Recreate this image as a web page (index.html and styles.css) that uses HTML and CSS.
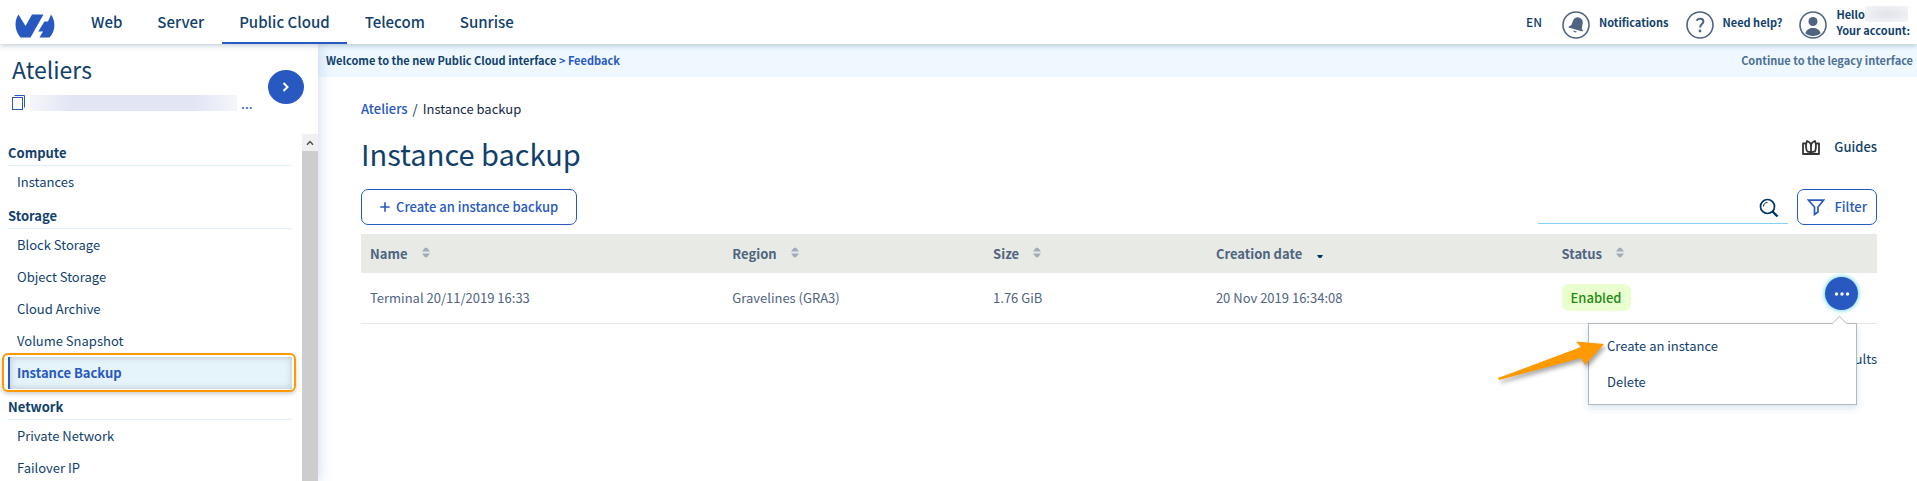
FILE: index.html
```html
<!DOCTYPE html>
<html lang="en">
<head>
<meta charset="utf-8">
<title>Instance backup</title>
<link rel="stylesheet" href="styles.css">
</head>
<body>
<header class="topbar">
  <a class="logo" href="#" aria-label="Home">
    <svg width="40" height="24" viewBox="0 0 40 24"><path fill="#2859c0" d="M3.500 0.500 10.500 12 17 0.500H28.500L15.500 23.500H5.500C-.5 17 -1 7 3.500 .5ZM36 .5C41 8 40.500 17 34.500 23.500H24.500L28 17.500H23.200L29.500 7.500H33Z"/></svg>
  </a>
  <nav class="nav">
    <a href="#">Web</a>
    <a href="#">Server</a>
    <a href="#" class="current">Public Cloud</a>
    <a href="#">Telecom</a>
    <a href="#">Sunrise</a>
  </nav>
  <div class="tools">
    <button class="lang">EN</button>
    <button class="tool">
      <svg width="28" height="28" viewBox="0 0 28 28"><circle cx="14" cy="14" r="13" fill="none" stroke="#4f6480" stroke-width="1.600"/><path fill="#4f6480" d="M17 6.500c3 1 4.500 3.500 3.500 7l-.5 2.500c-.3 1.500 0 2.500 1 3.500l-.5 1L6.500 16.500l.3-1.200c1.600-.2 2.400-.9 3-2.300l1-2.700c1-3 3.300-4.500 5.500-4zM11 19.500l4 1.200c-.6 1.300-3.500.8-4-1.200z"/></svg>
      <span>Notifications</span>
    </button>
    <button class="tool">
      <svg width="28" height="28" viewBox="0 0 28 28"><circle cx="14" cy="14" r="13" fill="none" stroke="#4f6480" stroke-width="1.600"/><path fill="none" stroke="#4f6480" stroke-width="2" d="M10.800 9.800c.8-3 6.600-2.800 6.600.6 0 2.500-3.400 3-3.400 6.200"/><circle cx="14" cy="20" r="1.400" fill="#4f6480"/></svg>
      <span>Need help?</span>
    </button>
    <button class="tool account">
      <svg width="28" height="28" viewBox="0 0 28 28"><circle cx="14" cy="14" r="13" fill="none" stroke="#4f6480" stroke-width="1.600"/><circle cx="14" cy="10.500" r="4.500" fill="#4f6480"/><path fill="#4f6480" d="M6.500 22.500c.5-7.500 14.500-7.500 15 0-3.500 3.300-11.500 3.300-15 0z"/></svg>
      <span><span class="hello">Hello<i class="name-mask"></i></span>Your account:</span>
    </button>
  </div>
</header>
<div class="body">
  <aside class="sidebar">
    <div class="project">
      <div class="project-info">
        <h2>Ateliers</h2>
        <div class="project-id">
          <svg width="14" height="16" viewBox="0 0 14 16" fill="none" stroke="#2859c0"><rect x=".5" y="2.500" width="10" height="12"/><path d="M2.500.5h10v12"/></svg>
          <i class="id-mask"></i><span>...</span>
        </div>
      </div>
      <button class="round" aria-label="Switch project"><svg width="8" height="10" viewBox="0 0 8 10"><path fill="none" stroke="#fff" stroke-width="2" d="M1.500 1 5.500 5l-4 4"/></svg></button>
    </div>
    <div class="side-scroll">
      <nav class="menu">
        <h3>Compute</h3>
        <a href="#">Instances</a>
        <h3>Storage</h3>
        <a href="#">Block Storage</a>
        <a href="#">Object Storage</a>
        <a href="#">Cloud Archive</a>
        <a href="#">Volume Snapshot</a>
        <a href="#" class="active">Instance Backup</a>
        <h3>Network</h3>
        <a href="#">Private Network</a>
        <a href="#">Failover IP</a>
      </nav>
      <div class="scrollbar"><div class="scroll-up"><svg width="8" height="6" viewBox="0 0 8 6"><path fill="none" stroke="#505050" stroke-width="1.500" d="M1 4.700 4 1.500l3 3.200"/></svg></div></div>
    </div>
  </aside>
  <main class="main">
    <div class="banner">
      <p>Welcome to the new Public Cloud interface <a href="#">&gt; Feedback</a></p>
      <a class="legacy" href="#">Continue to the legacy interface</a>
    </div>
    <div class="content">
      <nav class="crumbs"><a href="#">Ateliers</a><span>/</span><span>Instance backup</span></nav>
      <div class="heading">
        <h1>Instance backup</h1>
        <button class="guides"><svg width="18" height="15" viewBox="0 0 18 15" fill="none" stroke="#333" stroke-width="1.800" stroke-linejoin="round"><path d="M3.500 3.500H1V14h16V3.500h-2.500M5 11.500C3.800 8 3.800 4 5 1c2.500 1 4 2.500 4 5M5 11.500C7 11.500 8.500 12.300 9 13.500c.5-1.200 2-2 4-2C14.200 8 14.200 4 13 1 10.500 2 9 3.500 9 6v6"/></svg>Guides</button>
      </div>
      <div class="actions">
        <button class="btn create"><svg width="10" height="10" viewBox="0 0 10 10"><path stroke="#2859c0" stroke-width="1.600" d="M5 .3v9.400M.3 5h9.400"/></svg>Create an instance backup</button>
        <div class="search">
          <input type="search" aria-label="Search">
          <svg width="20" height="20" viewBox="0 0 20 20" fill="none" stroke="#00355f"><circle cx="8.500" cy="8.500" r="7" stroke-width="1.700"/><path stroke-width="2.400" d="m13.500 13.500 5 5"/><path stroke-width="1" d="M4.500 8.500c0-2.500 1.500-4 4-4"/></svg>
        </div>
        <button class="btn filter"><svg width="18" height="17" viewBox="0 0 18 17" fill="none" stroke="#2859c0" stroke-width="1.700"><path d="M1.500 1.200h15L11 8v5l-3.500 2.500V8z"/></svg>Filter</button>
      </div>
      <table class="grid">
        <thead>
          <tr>
            <th class="c-name">Name<svg class="sort" width="8" height="12" viewBox="0 0 8 12"><path d="M0 4.500 2.500 1.200 4 .5l1.500.7L8 4.500zM0 6.500h8L5.500 9.800 4 10.500l-1.500-.7z"/></svg></th>
            <th class="c-region">Region<svg class="sort" width="8" height="12" viewBox="0 0 8 12"><path d="M0 4.500 2.500 1.200 4 .5l1.500.7L8 4.500zM0 6.500h8L5.500 9.800 4 10.500l-1.500-.7z"/></svg></th>
            <th class="c-size">Size<svg class="sort" width="8" height="12" viewBox="0 0 8 12"><path d="M0 4.500 2.500 1.200 4 .5l1.500.7L8 4.500zM0 6.500h8L5.500 9.800 4 10.500l-1.500-.7z"/></svg></th>
            <th class="c-date">Creation date<svg class="sort on" width="8" height="12" viewBox="0 0 8 12"><path d="M1 8h6L5.500 10.500 4 11.300l-1.500-.8z"/></svg></th>
            <th class="c-status">Status<svg class="sort" width="8" height="12" viewBox="0 0 8 12"><path d="M0 4.500 2.500 1.200 4 .5l1.500.7L8 4.500zM0 6.500h8L5.500 9.800 4 10.500l-1.500-.7z"/></svg></th>
            <th></th>
          </tr>
        </thead>
        <tbody>
          <tr>
            <td>Terminal 20/11/2019 16:33</td>
            <td>Gravelines (GRA3)</td>
            <td>1.76 GiB</td>
            <td>20 Nov 2019 16:34:08</td>
            <td><span class="badge">Enabled</span></td>
            <td class="row-menu">
              <div class="anchor">
                <button class="round small" aria-label="Actions"><svg width="16" height="4" viewBox="0 0 16 4" fill="#fff"><circle cx="2.500" cy="2" r="1.700"/><circle cx="8" cy="2" r="1.700"/><circle cx="13.500" cy="2" r="1.700"/></svg></button>
                <div class="dropdown">
                  <button>Create an instance</button>
                  <button>Delete</button>
                  <svg class="pointer" width="108" height="40" viewBox="0 0 108 40"><path fill="#ff9900" d="M1 37 84 6 79 .500 107 3 88 24 84 17 2 39Z"/></svg>
                </div>
              </div>
            </td>
          </tr>
        </tbody>
      </table>
      <p class="results">1 results</p>
    </div>
  </main>
</div>
</body>
</html>
```

FILE: styles.css
```css
* { box-sizing: border-box; }
body {
  margin: 0;
  height: 100vh;
  display: flex;
  flex-direction: column;
  overflow: hidden;
  background: #fff;
  color: #113f6d;
  font: 13px/20px "Noto Sans CJK SC", "Noto Sans", sans-serif;
}
a { color: inherit; text-decoration: none; }
h1, h2, h3, p { margin: 0; font-weight: 400; }
button { font: inherit; color: inherit; background: none; border: 0; padding: 0; cursor: pointer; }
svg { display: block; flex: none; }

.topbar {
  position: relative;
  z-index: 2;
  flex: none;
  display: flex;
  height: 44px;
  background: #fff;
  box-shadow: 0 1px 6px rgba(0, 55, 95, .3);
}
.logo { padding: 14px 19px 0 15px; }
.nav { display: flex; gap: 1px; }
.nav a {
  padding: 12px 17px 0;
  font-size: 15px;
  font-weight: 500;
  border-bottom: 2px solid transparent;
}
.nav .current { border-color: #2859c0; }
.tools {
  display: flex;
  align-items: center;
  margin-left: auto;
  padding-right: 7px;
  font-size: 11px;
  font-weight: 700;
}
.lang { margin-right: 20px; font-weight: 500; font-size: 12px; }
.tool { display: flex; align-items: center; gap: 9px; margin-right: 17px; line-height: 16px; text-align: left; }
.tool svg { margin-top: 5px; }
.account { margin-right: 0; }
.hello { display: flex; }
.name-mask { width: 43px; height: 16px; background: radial-gradient(#e0e3e9, #f4f5f8); }

.body { flex: 1; display: flex; min-height: 0; }
.sidebar {
  position: relative;
  z-index: 1;
  flex: none;
  display: flex;
  flex-direction: column;
  width: 318px;
  background: #fff;
  box-shadow: 0 0 14px rgba(40, 89, 192, .25);
}
.project { display: flex; justify-content: space-between; height: 90px; padding: 11px 14px 0 12px; }
.project h2 { font-size: 23px; line-height: 28px; }
.project-id { display: flex; align-items: center; gap: 4px; margin-top: 12px; color: #2859c0; font-size: 14px; line-height: 16px; }
.id-mask { width: 207px; height: 16px; background: linear-gradient(90deg, #f5f6fb, #e2e6f4 20%, #e2e6f4 80%, #f5f6fb); }
.round {
  display: flex;
  align-items: center;
  justify-content: center;
  width: 36px;
  height: 34px;
  margin-top: 15px;
  border-radius: 50%;
  background: #2859c0;
}
.side-scroll { flex: 1; display: flex; min-height: 0; }
.menu { flex: 1; padding: 1px 10px 0 8px; }
.menu h3 { height: 31px; padding-top: 8px; font-size: 13px; font-weight: 700; border-bottom: 1px solid #dff1fa; }
.menu a { display: block; padding: 6px 9px; }
.menu .active {
  position: relative;
  padding-left: 7px;
  border-left: 2px solid #2859c0;
  background: #e5f3fb;
  color: #2859c0;
  font-weight: 700;
  box-shadow: inset 0 0 7px rgba(0, 0, 0, .2);
}
.active::after {
  content: "";
  position: absolute;
  inset: -4px -4px -3px -8px;
  border: 2px solid #f90;
  border-radius: 6px;
  box-shadow: 0 2px 4px rgba(0, 0, 0, .2);
}
.scrollbar { width: 16px; background: #cdcdcd; }
.scroll-up { display: flex; align-items: center; justify-content: center; height: 17px; background: #f0f0f0; }

.main { flex: 1; min-width: 0; }
.banner {
  display: flex;
  justify-content: space-between;
  padding: 6px 4px 7px 8px;
  background: #eef8fe;
  font-size: 11px;
}
.banner p { font-weight: 700; }
.banner p a { color: #2859c0; }
.legacy { color: #4d7096; font-weight: 700; }
.content { padding: 22px 40px 0 43px; }
.crumbs { display: flex; gap: 5px; color: #122844; }
.crumbs a { color: #2859c0; font-weight: 500; }
.heading { display: flex; justify-content: space-between; margin-top: 14px; }
.heading h1 { font-size: 29px; line-height: 40px; }
.guides { display: flex; align-items: center; gap: 14px; height: 28px; font-weight: 500; }
.actions { display: flex; gap: 9px; margin-top: 16px; }
.btn {
  display: flex;
  align-items: center;
  height: 36px;
  border: 1px solid #2859c0;
  border-radius: 7px;
  color: #2859c0;
  font-weight: 500;
}
.create { gap: 6px; padding: 0 18px; }
.filter { gap: 9px; padding: 0 9px; }
.search { display: flex; align-items: center; width: 250px; height: 35px; margin-left: auto; padding: 4px 9px 0 0; border-bottom: 1px solid #85d0f5; }
.search input { flex: 1; min-width: 0; height: 30px; border: 0; outline: 0; font: inherit; }

.grid { width: 100%; margin-top: 9px; border-collapse: collapse; table-layout: fixed; color: #4f6480; }
.grid th, .grid td { padding: 0 9px; text-align: left; }
.grid th { height: 39px; background: #e8ebe5; font-weight: 700; }
.grid td { height: 50px; border-bottom: 1px solid #e6e8e8; }
.c-name { width: 23.9%; }
.c-region { width: 17.2%; }
.c-size { width: 14.7%; }
.c-date { width: 22.8%; }
.c-status { width: 11%; }
.sort { display: inline-block; margin-left: 14px; fill: #a2abb8; }
.sort.on { fill: #00355f; }
.badge { display: inline-block; padding: 4px 9px 3px; border-radius: 7px; background: #eaffd0; color: #1f8a12; font-weight: 500; }
.anchor { position: relative; display: flex; justify-content: flex-end; padding-right: 10px; }
.round.small { width: 33px; height: 33px; margin: -8px 0 0; box-shadow: 0 0 5px #3cc4e0; }
.dropdown {
  position: absolute;
  z-index: 1;
  top: 38px;
  right: 11px;
  width: 269px;
  padding: 4px 0;
  border: 1px solid #b5b8ba;
  background: #fff;
  box-shadow: 0 3px 7px rgba(0, 80, 150, .16);
  color: #113f6d;
}
.dropdown button { display: block; width: 100%; padding: 8px 18px; text-align: left; }
.dropdown::before {
  content: "";
  position: absolute;
  top: -6px;
  right: 11px;
  width: 10px;
  height: 10px;
  border: solid #c8cacc;
  border-width: 1px 0 0 1px;
  background: #fff;
  transform: rotate(45deg);
}
.pointer { position: absolute; top: 17px; left: -92px; overflow: visible; filter: drop-shadow(2px 3px 2px rgba(0, 0, 0, .35)); }
.results { margin-top: 25px; text-align: right; }
```
